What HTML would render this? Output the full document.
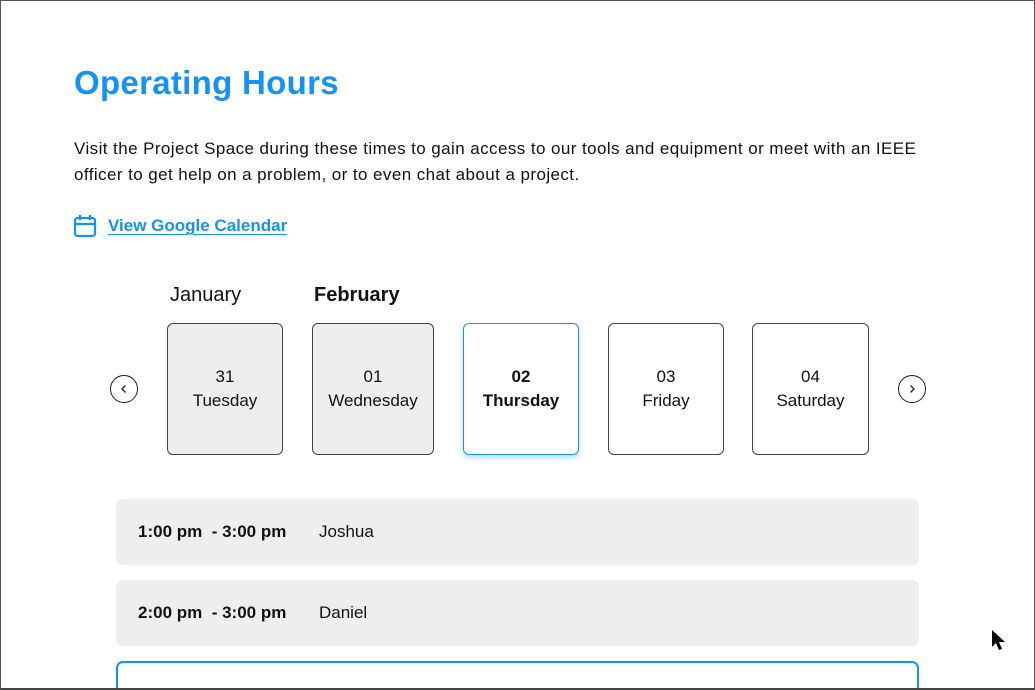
<!DOCTYPE html>
<html><head><style>
html{overflow:hidden;height:690px}
html,body{margin:0;padding:0;background:#fff}
body{width:1035px;height:690px;overflow:hidden;position:relative;font-family:"Liberation Sans",sans-serif;color:#111}
.frame{position:absolute;left:0;top:0;width:1033px;height:687px;border:1px solid #555;border-bottom:2px solid #444;z-index:5;pointer-events:none}
.a{position:absolute}
h1{position:absolute;left:74px;top:64px;margin:0;font-size:33px;font-weight:bold;color:#1592f5;letter-spacing:0.3px}
.p{left:74px;top:136px;font-size:17px;line-height:26px;letter-spacing:0.42px;width:880px}
.link{left:108px;top:216px;font-size:17px;color:#1592f5;font-weight:bold;text-decoration:underline;text-decoration-thickness:1px;text-underline-offset:3px}
.card{position:absolute;top:323px;height:132px;border:1px solid #444;border-radius:6px;display:flex;flex-direction:column;align-items:center;justify-content:center;font-size:17px;line-height:24px;text-align:center;box-sizing:border-box}
.g{background:#eee}
.sel{border:1.5px solid #1592f5;box-shadow:0 3px 6px rgba(21,146,245,.3);font-weight:bold}
.circ{position:absolute;top:375px;width:28px;height:28px;border:1px solid #222;border-radius:50%;box-sizing:border-box}
.row{position:absolute;left:116px;width:803px;height:66px;background:#eee;border-radius:7px;font-size:17px}
.row b{position:absolute;left:22px;top:23px}
.row span{position:absolute;left:203px;top:23px}
</style></head><body>
<div class="frame"></div>
<h1>Operating Hours</h1>
<div class="a p">Visit the Project Space during these times to gain access to our tools and equipment or meet with an IEEE officer to get help on a problem, or to even chat about a project.</div>
<svg class="a" style="left:73px;top:214px" width="24" height="24" viewBox="0 0 24 24" fill="none" stroke="#1592f5" stroke-width="2.2"><rect x="2" y="4" width="20" height="18" rx="2.5"/><line x1="2" y1="10" x2="22" y2="10"/><line x1="7" y1="1" x2="7" y2="6"/><line x1="17" y1="1" x2="17" y2="6"/></svg>
<div class="a link">View Google Calendar</div>
<div class="a" style="left:170px;top:284px;font-size:20px">January</div>
<div class="a" style="left:314px;top:284px;font-size:20px;font-weight:bold">February</div>
<div class="circ" style="left:110px"><svg width="26" height="26" viewBox="0 0 26 26"><path d="M14.5 9.5l-3.5 3.5 3.5 3.5" fill="none" stroke="#222" stroke-width="1.3"/></svg></div>
<div class="circ" style="left:898px"><svg width="26" height="26" viewBox="0 0 26 26"><path d="M11.5 9.5l3.5 3.5-3.5 3.5" fill="none" stroke="#222" stroke-width="1.3"/></svg></div>
<div class="card g" style="left:167px;width:116px"><div>31</div><div>Tuesday</div></div>
<div class="card g" style="left:312px;width:122px"><div>01</div><div>Wednesday</div></div>
<div class="card sel" style="left:463px;width:116px"><div>02</div><div>Thursday</div></div>
<div class="card" style="left:608px;width:116px"><div>03</div><div>Friday</div></div>
<div class="card" style="left:752px;width:117px"><div>04</div><div>Saturday</div></div>
<div class="row" style="top:499px"><b>1:00 pm&nbsp; - 3:00 pm</b><span>Joshua</span></div>
<div class="row" style="top:580px"><b>2:00 pm&nbsp; - 3:00 pm</b><span>Daniel</span></div>
<div class="a" style="left:116px;top:661px;width:799px;height:40px;border:2px solid #1592f5;border-radius:7px"></div>
<svg class="a" style="left:991px;top:629px" width="16" height="24" viewBox="0 0 16 24"><path d="M1 1v17l4-4 3 7 3-1-3-7h6z" fill="#000"/></svg>
</body></html>
